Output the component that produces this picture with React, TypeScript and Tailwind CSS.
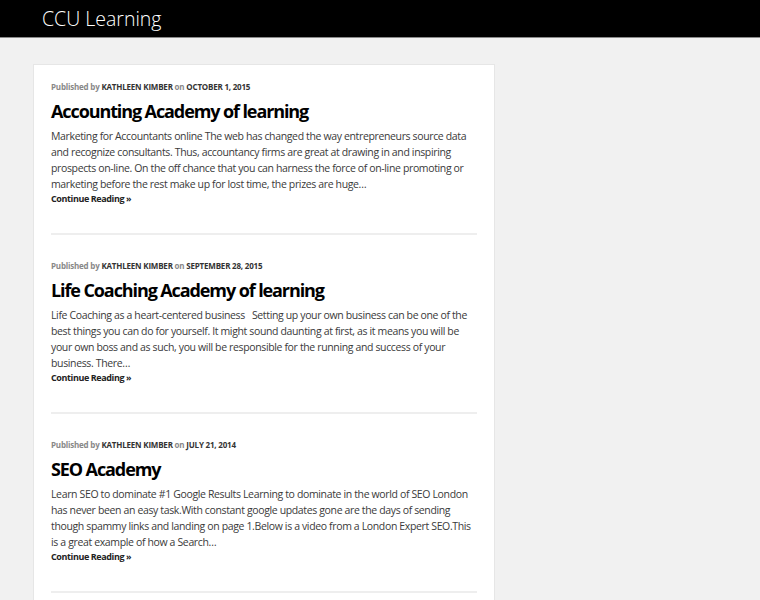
import React from 'react';

type Post = {
  date: string;
  title: string;
  excerpt: string;
};

const posts: Post[] = [
  {
    date: 'OCTOBER 1, 2015',
    title: 'Accounting Academy of learning',
    excerpt:
      'Marketing for Accountants online The web has changed the way entrepreneurs source data and recognize consultants. Thus, accountancy firms are great at drawing in and inspiring prospects on-line. On the off chance that you can harness the force of on-line promoting or marketing before the rest make up for lost time, the prizes are huge…',
  },
  {
    date: 'SEPTEMBER 28, 2015',
    title: 'Life Coaching Academy of learning',
    excerpt:
      'Life Coaching as a heart-centered business \u00a0\u00a0Setting up your own business can be one of the best things you can do for yourself. It might sound daunting at first, as it means you will be your own boss and as such, you will be responsible for the running and success of your business. There…',
  },
  {
    date: 'JULY 21, 2014',
    title: 'SEO Academy',
    excerpt:
      'Learn SEO to dominate #1 Google Results Learning to dominate in the world of SEO London has never been an easy task.With constant google updates gone are the days of sending though spammy links and landing on page 1.Below is a video from a London Expert SEO.This is a great example of how a Search…',
  },
];

export default function App() {
  return (
    <div className="min-h-screen bg-[#f1f1f1] font-['Open_Sans',sans-serif]">
      {/* Header */}
      <header className="h-[38px] bg-black border-b border-[#8a8a8a] flex items-center px-[42px]">
        <span className="text-white text-[19.5px] font-light leading-none">CCU Learning</span>
      </header>

      <main className="pt-[26px] pl-[33px]">
        <div className="w-[462px] bg-white border border-[#e6e6e6] px-[17px] pt-[16px]">
          {posts.map((post) => (
            <article key={post.title} className="border-b-2 border-[#eeeeee] pb-[27px] mb-[25px]">
              <p className="text-[8px] leading-[12px] font-bold text-[#888] tracking-[-0.2px]">
                Published by <span className="text-[#333]">KATHLEEN KIMBER</span> on{' '}
                <span className="text-[#333]">{post.date}</span>
              </p>
              <h2 className="mt-[6px] text-[18px] leading-[24px] font-bold text-black tracking-[-1.1px]">
                {post.title}
              </h2>
              <p className="mt-[5px] text-[10.5px] leading-[16px] text-[#3a3a3a] tracking-[-0.36px]">{post.excerpt}</p>
              <a href="#" className="block text-[9px] leading-[14px] font-bold text-[#222] tracking-[-0.4px]">
                Continue Reading »
              </a>
            </article>
          ))}
        </div>
      </main>
    </div>
  );
}
